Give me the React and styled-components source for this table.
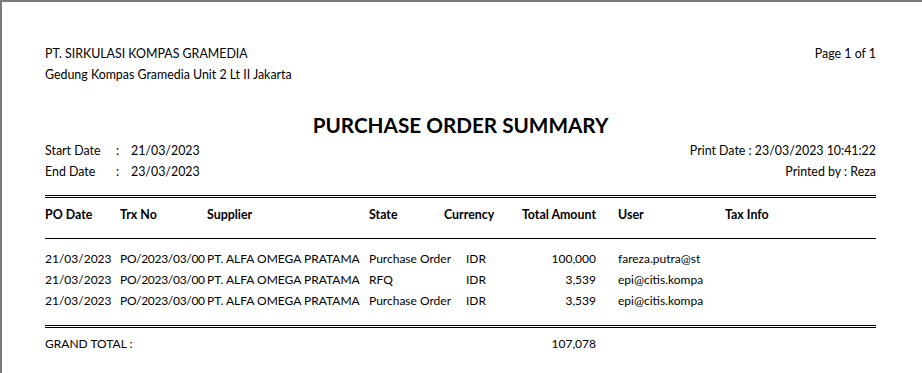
import React from "react";
import styled, { createGlobalStyle } from "styled-components";

const GlobalStyle = createGlobalStyle`
  html, body {
    margin: 0;
    padding: 0;
    background: #fff;
  }
  body {
    font-family: Lato, "Open Sans", "Liberation Sans", sans-serif;
    color: #000;
  }
`;

const Page = styled.div`
  box-sizing: border-box;
  width: 922px;
  height: 373px;
  overflow: hidden;
  border-top: 2px solid #7a7a7a;
  border-left: 2px solid #7a7a7a;
  padding: 41px 46px 0 43px;
  font-size: 12.4px;
  line-height: 21px;
`;

const TopRow = styled.div`
  display: flex;
  justify-content: space-between;
`;

const Stack = styled.div`
  display: flex;
  flex-direction: column;
  align-items: ${props => (props.right ? "flex-end" : "flex-start")};
`;

const Title = styled.h1`
  margin: 25px 0 0;
  text-align: center;
  font-size: 20.7px;
  line-height: 30px;
  font-weight: 700;
`;

const MetaRow = styled.div`
  display: flex;
  justify-content: space-between;
`;

const DateGrid = styled.div`
  display: grid;
  grid-template-columns: 71px 15px auto;
`;

const DoubleRule = styled.div`
  margin-top: ${props => props.top}px;
  height: 1px;
  border-top: 1px solid #000;
  border-bottom: 1px solid #000;
`;

const SingleRule = styled.div`
  margin-top: 13px;
  border-top: 1px solid #000;
`;

const Row = styled.div`
  display: grid;
  grid-template-columns: 75px 87px 162px 75px 76px 76px 129px 1fr;
  margin-top: ${props => props.top || 0}px;
  font-weight: ${props => (props.head ? 700 : 400)};
  font-size: ${props => (props.head ? 12.4 : 12)}px;
  white-space: nowrap;
`;

const Cell = styled.div`
  text-align: ${props => (props.num ? "right" : "left")};
  padding-left: ${props => props.indent || 0}px;
  grid-column: ${props => props.span || "auto"};
  letter-spacing: ${props => (props.tight ? "-0.3px" : "normal")};
`;

const Clip = styled.div`
  margin-left: 22px;
  width: 86px;
  overflow: hidden;
`;

const rows = [
  { state: "Purchase Order", amount: "100,000", user: "fareza.putra@st" },
  { state: "RFQ", amount: "3,539", user: "epi@citis.kompa" },
  { state: "Purchase Order", amount: "3,539", user: "epi@citis.kompa" },
];

export default function App() {
  return (
    <>
      <GlobalStyle />
      <Page>
        <TopRow>
          <Stack>
            <span>PT. SIRKULASI KOMPAS GRAMEDIA</span>
            <span>Gedung Kompas Gramedia Unit 2 Lt II Jakarta</span>
          </Stack>
          <span>Page 1 of 1</span>
        </TopRow>

        <Title>PURCHASE ORDER SUMMARY</Title>

        <MetaRow>
          <DateGrid>
            <span>Start Date</span>
            <span>:</span>
            <span>21/03/2023</span>
            <span>End Date</span>
            <span>:</span>
            <span>23/03/2023</span>
          </DateGrid>
          <Stack right>
            <span>Print Date : 23/03/2023 10:41:22</span>
            <span>Printed by : Reza</span>
          </Stack>
        </MetaRow>

        <DoubleRule top={13} />

        <Row head top={6}>
          <Cell>PO Date</Cell>
          <Cell>Trx No</Cell>
          <Cell>Supplier</Cell>
          <Cell>State</Cell>
          <Cell>Currency</Cell>
          <Cell num>Total Amount</Cell>
          <Cell indent={22}>User</Cell>
          <Cell>Tax Info</Cell>
        </Row>

        <SingleRule />

        {rows.map((r, i) => (
          <Row key={i} top={i === 0 ? 9 : 0}>
            <Cell>21/03/2023</Cell>
            <Cell tight>PO/2023/03/00</Cell>
            <Cell>PT. ALFA OMEGA PRATAMA</Cell>
            <Cell>{r.state}</Cell>
            <Cell indent={22}>IDR</Cell>
            <Cell num>{r.amount}</Cell>
            <Clip>{r.user}</Clip>
            <Cell />
          </Row>
        ))}

        <DoubleRule top={14} />

        <Row top={5}>
          <Cell span="1 / 6">GRAND TOTAL :</Cell>
          <Cell num>107,078</Cell>
        </Row>
      </Page>
    </>
  );
}
